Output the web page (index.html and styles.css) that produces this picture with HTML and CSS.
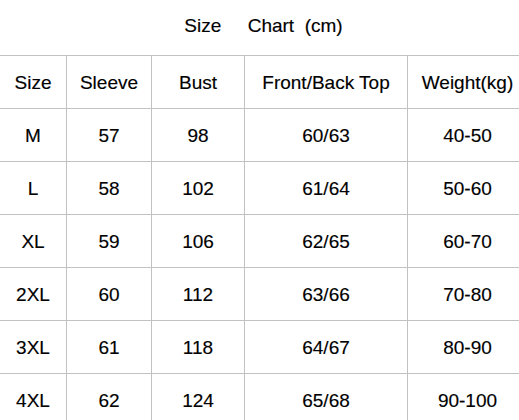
FILE: index.html
```html
<!DOCTYPE html>
<html>
<head>
<meta charset="utf-8">
<link rel="stylesheet" href="styles.css">
</head>
<body>
<div class="chart">
  <div class="title">Size     Chart  (cm)</div>
  <div class="grid">
    <div class="cell">Size</div><div class="cell">Sleeve</div><div class="cell">Bust</div><div class="cell">Front/Back Top</div><div class="cell">Weight(kg)</div>
    <div class="cell">M</div><div class="cell">57</div><div class="cell">98</div><div class="cell">60/63</div><div class="cell">40-50</div>
    <div class="cell">L</div><div class="cell">58</div><div class="cell">102</div><div class="cell">61/64</div><div class="cell">50-60</div>
    <div class="cell">XL</div><div class="cell">59</div><div class="cell">106</div><div class="cell">62/65</div><div class="cell">60-70</div>
    <div class="cell">2XL</div><div class="cell">60</div><div class="cell">112</div><div class="cell">63/66</div><div class="cell">70-80</div>
    <div class="cell">3XL</div><div class="cell">61</div><div class="cell">118</div><div class="cell">64/67</div><div class="cell">80-90</div>
    <div class="cell">4XL</div><div class="cell">62</div><div class="cell">124</div><div class="cell">65/68</div><div class="cell">90-100</div>
  </div>
</div>
</body>
</html>
```
FILE: styles.css
```css
html, body {
  margin: 0;
  padding: 0;
  background: #ffffff;
  overflow: hidden;
}
.chart {
  width: 527px;
  font-family: "Liberation Sans", Arial, sans-serif;
  font-size: 19px;
  color: #000000;
}
.title {
  height: 55px;
  display: flex;
  align-items: center;
  justify-content: center;
  white-space: pre;
  padding-bottom: 3px;
  box-sizing: border-box;
}
.grid {
  display: grid;
  grid-template-columns: 66px 85px 93px 163px 120px;
  grid-auto-rows: 53px;
}
.cell {
  box-sizing: border-box;
  border-top: 1px solid #c2c2c2;
  border-left: 1px solid #c2c2c2;
  display: flex;
  align-items: center;
  justify-content: center;
  padding-top: 1px;
  -webkit-text-stroke: 0.15px #000000;
}
.title {
  -webkit-text-stroke: 0.15px #000000;
}
.cell:nth-child(5n+1) {
  border-left: none;
}
```
